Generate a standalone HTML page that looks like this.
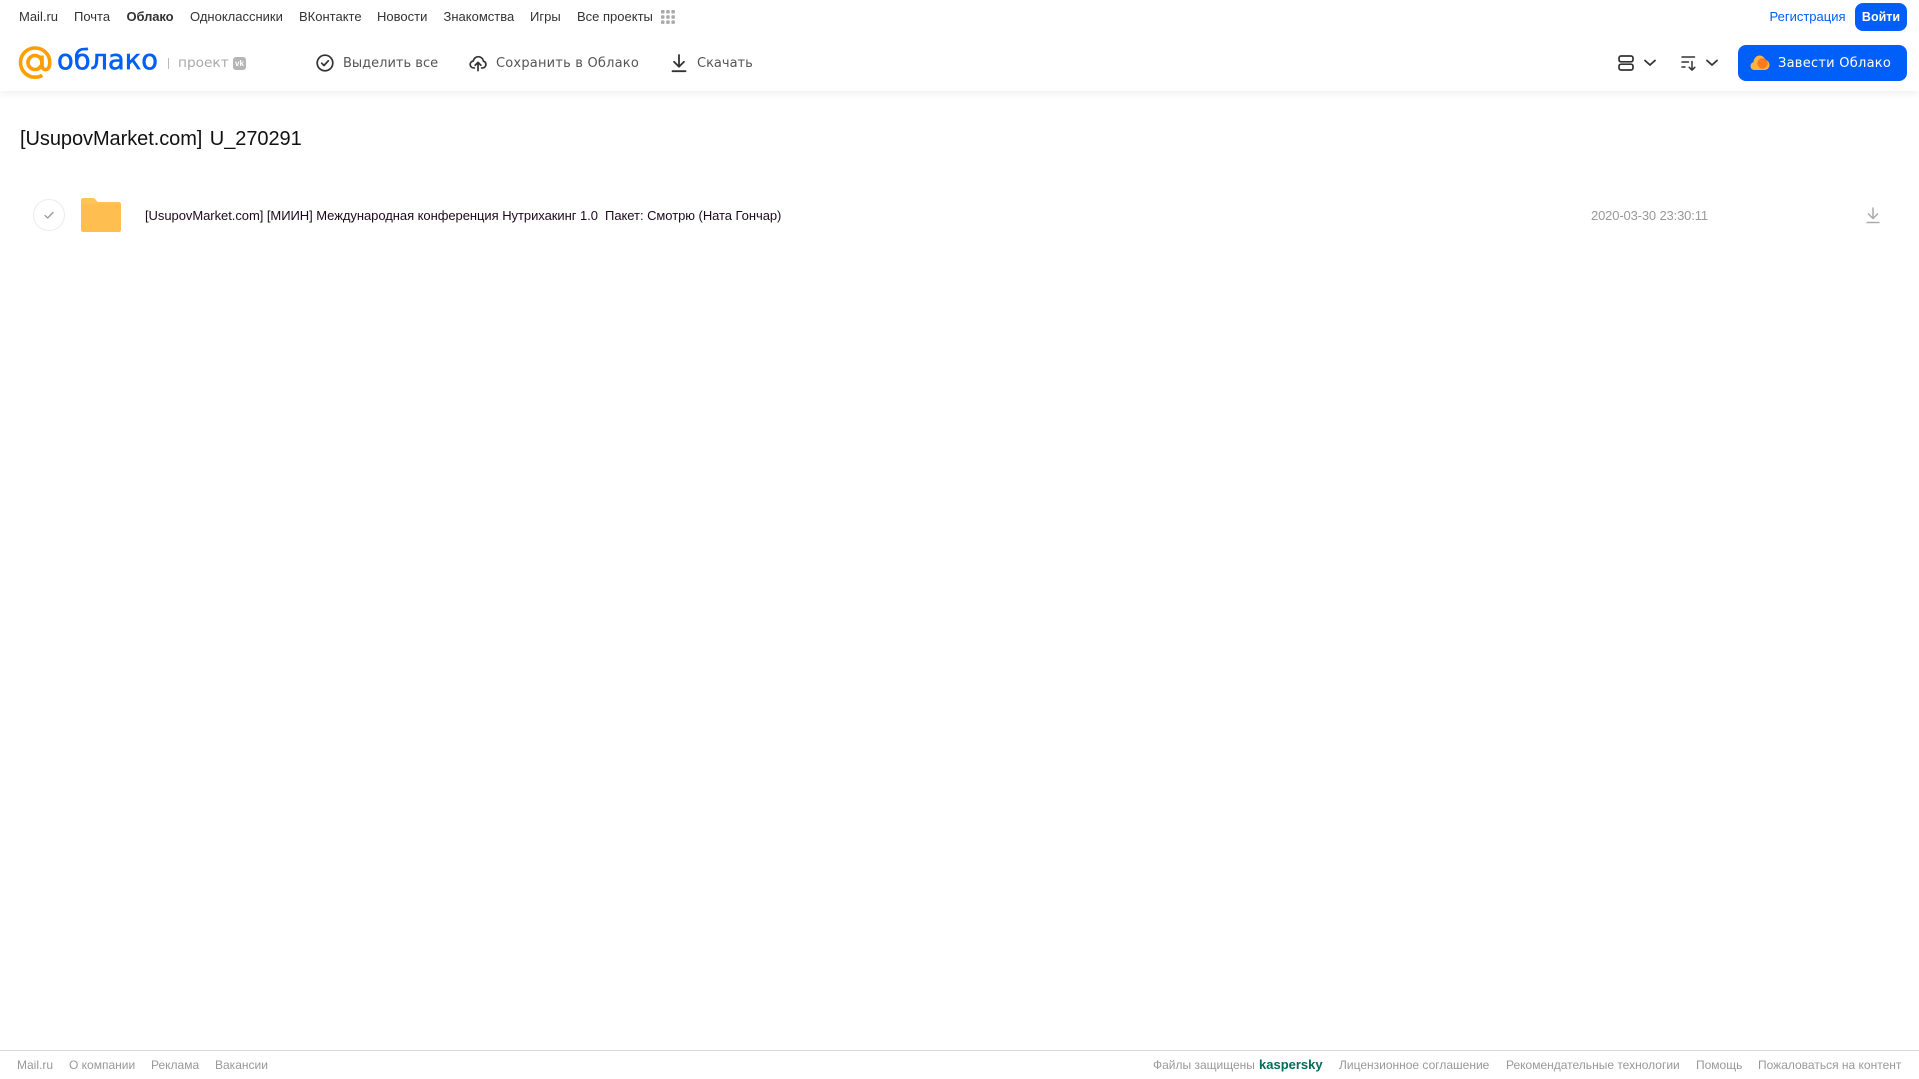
<!DOCTYPE html>
<html lang="ru"><head><meta charset="utf-8"><title>[UsupovMarket.com] U_270291</title>
<style>
html,body{margin:0;padding:0;background:#fff}
body{position:relative;width:1919px;height:1079px;overflow:hidden;font-family:"Liberation Sans",Arial,sans-serif}
.t{position:absolute;white-space:pre;line-height:20px;height:20px}
.n{top:7px;font-size:13px;color:#333}
.b{top:54px;font-size:13px;color:#555;font-family:"DejaVu Sans",sans-serif}
.f{top:1055px;font-size:12px;color:#999}
svg{position:absolute;display:block}
</style></head><body>
<div style="position:absolute;left:0;top:0;width:1919px;height:91px;background:#fff;box-shadow:0 2px 8px rgba(0,0,0,.07)"></div>

<span class="t n" style="left:19px">Mail.ru</span>
<span class="t n" style="left:74px">Почта</span>
<span class="t n" style="left:126.500px;font-weight:700;letter-spacing:-.1px">Облако</span>
<span class="t n" style="left:190px">Одноклассники</span>
<span class="t n" style="left:299px">ВКонтакте</span>
<span class="t n" style="left:377px">Новости</span>
<span class="t n" style="left:443.500px">Знакомства</span>
<span class="t n" style="left:530px">Игры</span>
<span class="t n" style="left:577px">Все проекты</span>
<svg style="left:661px;top:10px" width="14" height="14" viewBox="0 0 14 14" fill="#aaa"><rect x="0" y="0" width="3.500" height="3.500" rx=".8"/><rect x="5.200" y="0" width="3.500" height="3.500" rx=".8"/><rect x="10.400" y="0" width="3.500" height="3.500" rx=".8"/><rect x="0" y="5.200" width="3.500" height="3.500" rx=".8"/><rect x="5.200" y="5.200" width="3.500" height="3.500" rx=".8"/><rect x="10.400" y="5.200" width="3.500" height="3.500" rx=".8"/><rect x="0" y="10.400" width="3.500" height="3.500" rx=".8"/><rect x="5.200" y="10.400" width="3.500" height="3.500" rx=".8"/><rect x="10.400" y="10.400" width="3.500" height="3.500" rx=".8"/></svg>

<span class="t" style="left:1769.500px;top:7px;font-size:13px;color:#005ff9">Регистрация</span>
<div style="position:absolute;left:1855px;top:3px;width:52px;height:28px;background:#005ff9;border-radius:8px;color:#fff;font-size:12.500px;font-weight:700;line-height:28px;text-align:center">Войти</div>

<svg style="left:18px;top:46px" width="34" height="34" viewBox="0 0 34 34" fill="none" stroke="#ff9e00" stroke-width="3.600"><circle cx="17" cy="16.500" r="7"/><path d="M24 9.500v9.500c0 3.200 1.700 4.600 3.600 4.600 2.600 0 4.200-2.800 4.200-7.100C31.800 8.300 25.200 2 17 2 8.800 2 2.500 8.600 2.500 16.500S8.800 31.200 17 31.200c2.900 0 5.300-.7 7.300-1.900"/></svg>
<span class="t" style="left:57px;top:45px;height:32px;line-height:32px;font-family:'DejaVu Sans',sans-serif;font-size:27.300px;color:#005ff9;-webkit-text-stroke:.6px #005ff9">облако</span>
<div style="position:absolute;left:168px;top:58px;width:1px;height:11px;background:#bbb"></div>
<span class="t" style="left:178px;top:53px;font-family:'DejaVu Sans',sans-serif;font-size:13.700px;color:#a9a9a9">проект</span>
<div style="position:absolute;left:233px;top:57px;width:13px;height:13px;border-radius:3px;background:#b5b5b5;color:#fff;font-size:8px;font-weight:700;line-height:13px;text-align:center">vk</div>

<svg style="left:315px;top:53px" width="20" height="20" viewBox="0 0 20 20" fill="none" stroke="#333" stroke-width="1.700" stroke-linecap="round" stroke-linejoin="round"><circle cx="10" cy="10" r="7.800"/><path d="M6.700 10.200l2.300 2.300 4.300-4.700"/></svg>
<span class="t b" style="left:343px">Выделить все</span>
<svg style="left:469px;top:54px" width="18" height="18" viewBox="0 0 20 20" fill="none" stroke="#333" stroke-width="1.900" stroke-linecap="round" stroke-linejoin="round"><path d="M6 15.500H5.200C3 15.500 1.300 13.800 1.300 11.700c0-2 1.500-3.600 3.400-3.800C5.300 5 7.600 3 10.300 3c3 0 5.400 2.200 5.700 5 1.700.4 2.800 1.900 2.800 3.700 0 2.100-1.700 3.800-3.800 3.800H14"/><path d="M10 18.500V9.500M6.800 12.500L10 9.300l3.200 3.200"/></svg>
<span class="t b" style="left:496px;letter-spacing:.2px">Сохранить в Облако</span>
<svg style="left:670px;top:53px" width="18" height="20" viewBox="0 0 18 20" fill="none" stroke="#333" stroke-width="1.800" stroke-linecap="round" stroke-linejoin="round"><path d="M9 2v11.500M4 8.800l5 5 5-5M2.500 18.200h13"/></svg>
<span class="t b" style="left:697px">Скачать</span>

<svg style="left:1618px;top:55px" width="16" height="16" viewBox="0 0 16 16" fill="none" stroke="#333" stroke-width="1.700"><rect x="1" y="1" width="14" height="5.800" rx="2"/><rect x="1" y="9.200" width="14" height="5.800" rx="2"/></svg>
<svg style="left:1643px;top:58px" width="14" height="10" viewBox="0 0 14 10" fill="none" stroke="#333" stroke-width="1.800" stroke-linecap="round" stroke-linejoin="round"><path d="M2 2.500l5 4.500 5-4.500"/></svg>
<svg style="left:1680px;top:54px" width="18" height="18" viewBox="0 0 18 18" fill="none" stroke="#333" stroke-width="1.500" stroke-linecap="round" stroke-linejoin="round"><path d="M2 3h12.500M2 8h6.500M2 13h3M12 7.500v8.500M9.200 13.300l2.800 2.800 2.800-2.800"/></svg>
<svg style="left:1705px;top:58px" width="14" height="10" viewBox="0 0 14 10" fill="none" stroke="#333" stroke-width="1.800" stroke-linecap="round" stroke-linejoin="round"><path d="M2 2.500l5 4.500 5-4.500"/></svg>

<div style="position:absolute;left:1738px;top:45px;width:169px;height:36px;background:#005ff9;border-radius:8px"></div>
<svg style="left:1750px;top:54px" width="20" height="17" viewBox="0 0 20 17"><path fill="#ffb53d" d="M4.500 16C2 16 .5 14.200.5 12c0-2 1.400-3.500 3-3.900C3.800 4.500 6.300 1.500 9.500 1.500c2.700 0 5 1.800 5.700 4.500 2.500.3 4.300 2.500 4.300 5 0 2.800-2.200 5-5 5z"/><circle cx="12.500" cy="9.500" r="5.200" fill="#ff7a1f"/></svg>
<span class="t b" style="left:1778px;color:#fff;letter-spacing:.25px">Завести Облако</span>

<span class="t" style="left:20px;top:127px;height:24px;line-height:24px;font-size:20px;color:#111;word-spacing:2px;letter-spacing:-.06px">[UsupovMarket.com] U_270291</span>

<div style="position:absolute;left:33px;top:199px;width:30px;height:30px;border:1px solid #ececec;border-radius:50%"></div>
<svg style="left:43px;top:209px" width="12" height="12" viewBox="0 0 12 12" fill="none" stroke="#999" stroke-width="1.300" stroke-linecap="round" stroke-linejoin="round"><path d="M2 6.500l2.700 2.500L10 3.500"/></svg>
<svg style="left:81px;top:198px" width="40" height="34" viewBox="0 0 40 34"><path fill="#ffc35c" d="M2 0h9.500c1.500 0 2.500.7 3.300 1.800L16.500 4H38c1.100 0 2 .9 2 2v6H0V2C0 .9.900 0 2 0z"/><path fill="#ffbe4f" d="M0 6h40v26c0 1.100-.9 2-2 2H2c-1.100 0-2-.9-2-2z"/></svg>
<span class="t" style="left:145px;top:206px;font-size:13px;letter-spacing:-.05px;color:#1d0a1d">[UsupovMarket.com] [МИИН] Международная конференция Нутрихакинг 1.0  Пакет: Смотрю (Ната Гончар)</span>
<span class="t" style="left:1591px;top:206px;font-size:13px;letter-spacing:-.15px;color:#999">2020-03-30 23:30:11</span>
<svg style="left:1865px;top:206px" width="16" height="18" viewBox="0 0 16 18" fill="none" stroke="#aaa" stroke-width="1.500" stroke-linejoin="round"><path d="M8 1.500v10.500M3 7.500l5 5 5-5M1.500 16.500h13"/></svg>

<div style="position:absolute;left:0;top:1050px;width:1919px;height:1px;background:#d9d9d9"></div>
<span class="t f" style="left:17px">Mail.ru</span>
<span class="t f" style="left:69px">О компании</span>
<span class="t f" style="left:151px">Реклама</span>
<span class="t f" style="left:215px">Вакансии</span>
<span class="t f" style="left:1153px">Файлы защищены</span>
<span class="t f" style="left:1259px;color:#006d5c;font-weight:700;font-size:13px">kaspersky</span>
<span class="t f" style="left:1339px">Лицензионное соглашение</span>
<span class="t f" style="left:1506px">Рекомендательные технологии</span>
<span class="t f" style="left:1696px">Помощь</span>
<span class="t f" style="left:1758px">Пожаловаться на контент</span>
</body></html>
